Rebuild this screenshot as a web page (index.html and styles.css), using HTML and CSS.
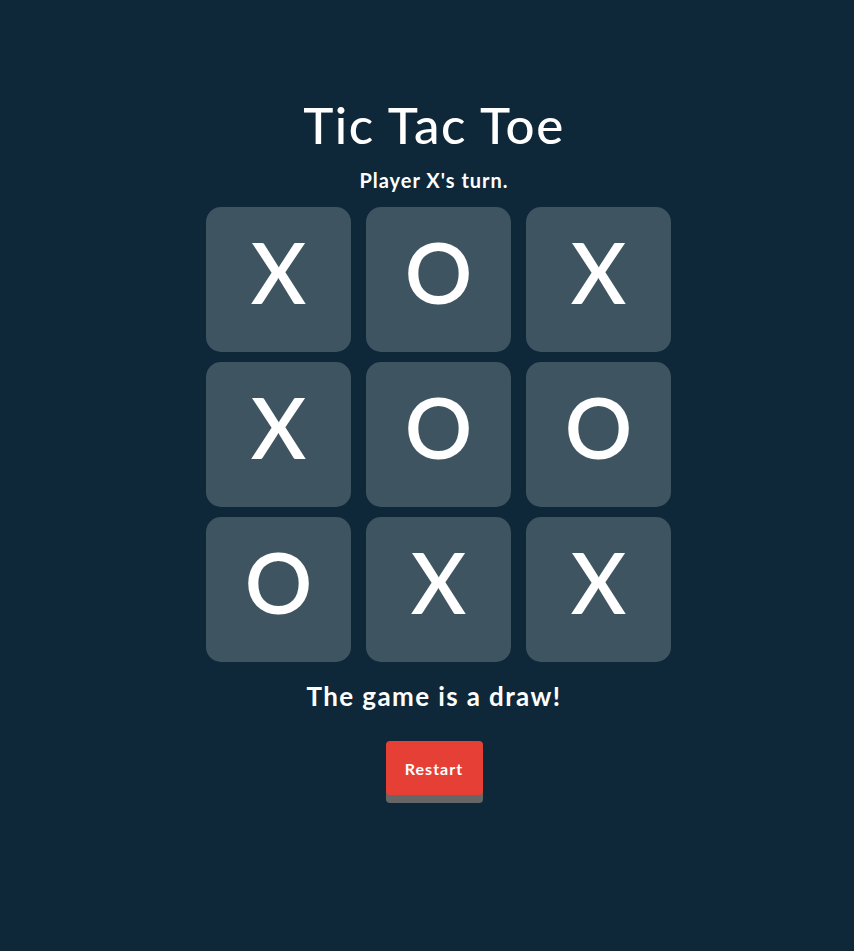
FILE: index.html
```html
<!DOCTYPE html>
<html lang="en">
<head>
<meta charset="utf-8">
<title>Tic Tac Toe</title>
<link rel="stylesheet" href="styles.css">
</head>
<body>
<main class="game">
  <h1 class="title">Tic Tac Toe</h1>
  <p class="turn">Player X's turn.</p>
  <div class="board">
    <div class="cell">X</div>
    <div class="cell">O</div>
    <div class="cell">X</div>
    <div class="cell">X</div>
    <div class="cell">O</div>
    <div class="cell">O</div>
    <div class="cell">O</div>
    <div class="cell">X</div>
    <div class="cell">X</div>
  </div>
  <p class="status">The game is a draw!</p>
  <button class="restart">Restart</button>
</main>
</body>
</html>
```
FILE: styles.css
```css
html, body {
  margin: 0;
  padding: 0;
  background: #0e2839;
}
body {
  font-family: "Lato", "Noto Sans", sans-serif;
  color: #ffffff;
  min-height: 951px;
}
.game {
  display: flex;
  flex-direction: column;
  align-items: center;
  padding-top: 95px;
  padding-left: 14px;
}
.title {
  margin: 0;
  font-size: 51px;
  line-height: 60px;
  font-weight: 500;
  letter-spacing: 1.6px;
}
.turn {
  margin: 13px 0 0;
  font-size: 20px;
  line-height: 24px;
  font-weight: 700;
  letter-spacing: 1px;
}
.board {
  margin-top: 15px;
  margin-left: 9px;
  display: grid;
  grid-template-columns: repeat(3, 145px);
  grid-auto-rows: 145px;
  column-gap: 15px;
  row-gap: 10px;
}
.cell {
  background: #3e5461;
  border-radius: 15px;
  display: flex;
  align-items: center;
  justify-content: center;
  font-size: 84px;
  font-weight: 600;
  line-height: 1;
  padding-bottom: 16px;
  box-sizing: border-box;
}
.status {
  margin: 18px 0 0;
  font-size: 26px;
  line-height: 32px;
  font-weight: 700;
  letter-spacing: 1.4px;
}
.restart {
  margin-top: 29px;
  width: 97px;
  height: 54px;
  border: none;
  border-radius: 4px;
  background: #e53f36;
  color: #ffffff;
  font-family: "Lato", "Noto Sans", sans-serif;
  font-size: 16px;
  font-weight: 700;
  letter-spacing: 1px;
  box-shadow: 0 8px 0 #666666;
}
```
